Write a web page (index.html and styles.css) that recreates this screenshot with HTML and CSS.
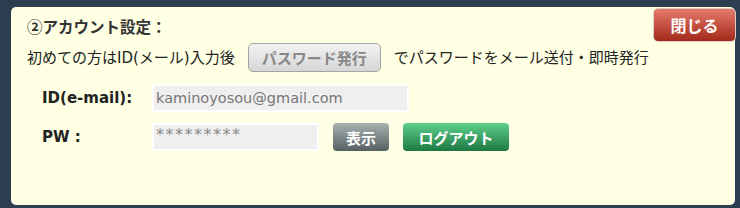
FILE: index.html
```html
<!DOCTYPE html>
<html lang="ja">
<head>
  <meta charset="utf-8"/>
  <meta name="viewport" content="width=device-width, initial-scale=1.0"/>
  <title>アカウント設定</title>
  <link rel="stylesheet" href="styles.css">
</head>
<body>
  <div class="panel">
    <button class="btn-close">閉じる</button>
    <h2 class="panel-title">②アカウント設定：</h2>
    <div class="intro">
      <span>初めての方はID(メール)入力後</span>
      <button class="btn-issue" disabled>パスワード発行</button>
      <span>でパスワードをメール送付・即時発行</span>
    </div>
    <div class="field-row">
      <label class="field-label" for="mail">ID(e-mail):</label>
      <input id="mail" class="field-input field-mail" type="text" value="kaminoyosou@gmail.com">
    </div>
    <div class="field-row">
      <label class="field-label" for="pw">PW :</label>
      <input id="pw" class="field-input field-pw" type="text" value="*********">
      <button class="btn btn-show">表示</button>
      <button class="btn btn-logout">ログアウト</button>
    </div>
  </div>
</body>
</html>
```

FILE: styles.css
```css
body {
  margin: 0;
  padding: 7px 5px 2px 11px;
  background-color: #2c3e50;
  font-family: "DejaVu Sans", "Noto Sans CJK JP", sans-serif;
  font-size: 15px;
  color: #222;
}
.panel {
  position: relative;
  height: 189px;
  padding: 9px 0 0 16px;
  background-color: #ffffe3;
  border-radius: 5px;
}
.panel-title {
  margin: 0;
  font-family: "Noto Sans CJK JP", sans-serif;
  font-size: 15.5px;
  line-height: 20px;
  font-weight: bold;
  color: #333;
}
.btn-close {
  position: absolute;
  top: 1px;
  right: -1px;
  width: 83px;
  height: 34px;
  padding: 0;
  border: 1px solid #d8d0c8;
  border-radius: 5px;
  background: linear-gradient(#e87a6c, #a2291a);
  color: #fff;
  font-family: inherit;
  font-size: 16px;
  font-weight: bold;
}
.intro {
  display: flex;
  align-items: center;
  gap: 13px;
  margin-top: 7px;
  line-height: 20px;
}
.btn-issue {
  width: 133px;
  height: 29px;
  padding: 0;
  border: 1px solid #a4a4a4;
  border-radius: 5px;
  background: linear-gradient(#f2f2f2, #d6d6d6);
  color: #888;
  font-family: inherit;
  font-size: 15px;
  font-weight: bold;
}
.field-row {
  display: flex;
  align-items: center;
  margin-top: 12px;
  padding-left: 15px;
}
.field-row + .field-row { margin-top: 11px; }
.field-label {
  width: 110px;
  font-weight: bold;
}
.field-input {
  box-sizing: border-box;
  height: 28px;
  padding: 0 2px;
  border: 2px solid #fff;
  background-color: #efefef;
  color: #777;
  font-family: inherit;
  font-size: 14.5px;
}
.field-mail { width: 257px; }
.field-pw {
  width: 167px;
  margin-right: 14px;
  padding-bottom: 6px;
  letter-spacing: 1.5px;
  font-size: 16px;
  color: #8a8a8a;
}
.btn {
  height: 28px;
  padding: 0;
  border: none;
  border-radius: 4px;
  color: #fff;
  font-family: inherit;
  font-size: 15px;
  font-weight: bold;
}
.btn-show {
  width: 56px;
  margin-right: 14px;
  background: linear-gradient(#a9b1b1, #566060);
}
.btn-logout {
  width: 106px;
  background: linear-gradient(#5fd08b, #1d7842);
}
```
